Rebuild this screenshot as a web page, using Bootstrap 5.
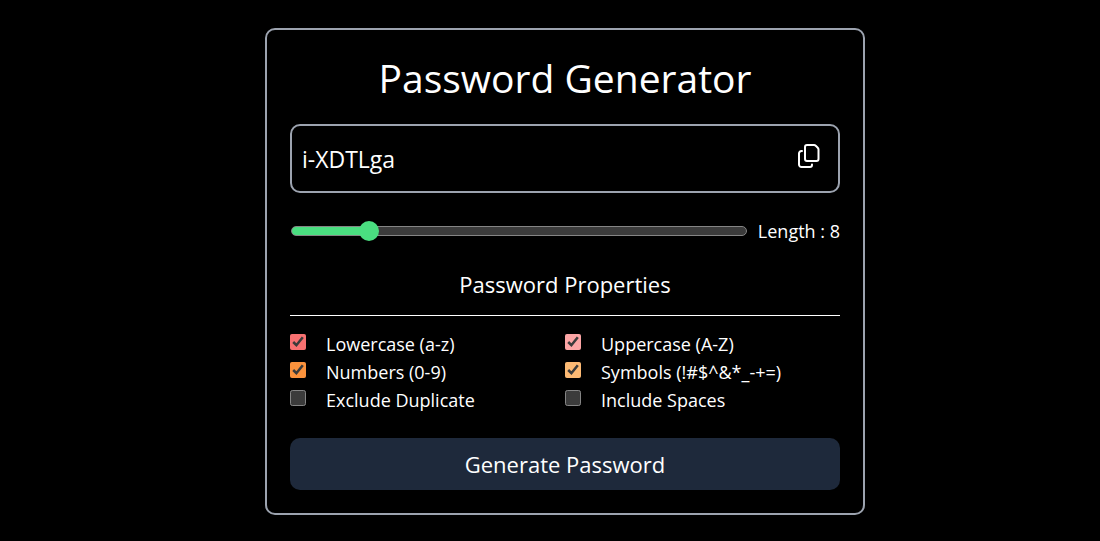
<!DOCTYPE html>
<html lang="en">
<head>
<meta charset="utf-8">
<meta name="viewport" content="width=device-width, initial-scale=1">
<title>Password Generator</title>
<link href="https://cdn.jsdelivr.net/npm/bootstrap@5.3.0/dist/css/bootstrap.min.css" rel="stylesheet">
<style>
  body { background: #000; color: #fff; color-scheme: dark; font-family: "Open Sans", "Noto Sans", sans-serif; font-size: 18px; line-height: 28px; }
  main { padding: 28px 0 24px 30px; }
  .generator { max-width: 600px; padding: 23px; border: 2px solid #9ca3af; border-radius: 10px; }
  .generator h1 { font-size: 39px; line-height: 50px; margin-bottom: 21px; font-weight: 400; }
  .output { height: 69px; padding: 0 10px; border: 2px solid #9ca3af; border-radius: 10px; }
  .output input { background: transparent; border: 0; outline: 0; padding: 0; color: #fff; font-size: 23px; line-height: 40px; height: 40px; min-width: 0; }
  .copy { background: none; border: 0; color: #fff; padding: 0 8px 6px; }
  .length-row { margin-top: 24px; gap: 10px; }
  .length-slider { --fill: 0%; appearance: none; -webkit-appearance: none; background: transparent; height: 20px; min-width: 0; margin: 0 1px; }
  .length-slider::-webkit-slider-runnable-track { height: 10px; border: 1px solid #858585; border-radius: 5px; background: linear-gradient(to right, #4ade80 var(--fill), #3b3b3b var(--fill)); }
  .length-slider::-webkit-slider-thumb { -webkit-appearance: none; width: 20px; height: 20px; margin-top: -6px; border-radius: 50%; background: #4ade80; }
  .generator h2 { font-size: 22px; line-height: 30px; font-weight: 400; margin: 24px 0 16px; }
  .properties { border-top: 1px solid #fff; padding-top: 14px; margin-bottom: 24px; }
  .option { gap: 20px; }
  .option input { width: 16px; height: 16px; margin: 0 0 4px; }
  .lower { accent-color: #f87171; }
  .upper { accent-color: #fca5a5; }
  .digits { accent-color: #fb923c; }
  .symbols { accent-color: #fdba74; }
  .generate, .generate:hover { background: #1e293b; color: #fff; font-size: 22px; line-height: 32px; padding: 10px; border: 0; border-radius: 10px; }
</style>
</head>
<body>
<main>
  <div class="generator mx-auto">
    <h1 class="text-center">Password Generator</h1>
    <div class="output d-flex align-items-center">
      <input class="flex-grow-1" type="text" value="i-XDTLga" aria-label="Generated password" readonly>
      <button class="copy d-flex" type="button" aria-label="Copy password">
        <svg width="22" height="24" viewBox="0 0 22 24" fill="none" stroke="currentColor" stroke-width="2" stroke-linejoin="round" stroke-linecap="round">
          <path d="M9 1H16Q17 1 18 2L19.500 3.500Q20.500 4.500 20.500 5.500V15A2 2 0 0 1 18.500 17H9A2 2 0 0 1 7 15V3A2 2 0 0 1 9 1Z"/>
          <path d="M4 7H3.500A2.500 2.500 0 0 0 1 9.500V20.500A2.500 2.500 0 0 0 3.500 23H12A2 2 0 0 0 14 21V20.500"/>
        </svg>
      </button>
    </div>
    <div class="length-row d-flex align-items-center">
      <input class="length-slider flex-grow-1" id="length" type="range" min="4" max="30" value="8" style="--fill: 16%">
      <label for="length" class="text-nowrap">Length : 8</label>
    </div>
    <h2 class="text-center">Password Properties</h2>
    <div class="properties row g-0">
      <div class="col-6 option d-flex align-items-center"><input class="lower" type="checkbox" id="lower" checked><label for="lower">Lowercase (a-z)</label></div>
      <div class="col-6 option d-flex align-items-center"><input class="upper" type="checkbox" id="upper" checked><label for="upper">Uppercase (A-Z)</label></div>
      <div class="col-6 option d-flex align-items-center"><input class="digits" type="checkbox" id="digits" checked><label for="digits">Numbers (0-9)</label></div>
      <div class="col-6 option d-flex align-items-center"><input class="symbols" type="checkbox" id="symbols" checked><label for="symbols">Symbols (!#$^&amp;*_-+=)</label></div>
      <div class="col-6 option d-flex align-items-center"><input type="checkbox" id="unique"><label for="unique">Exclude Duplicate</label></div>
      <div class="col-6 option d-flex align-items-center"><input type="checkbox" id="spaces"><label for="spaces">Include Spaces</label></div>
    </div>
    <button class="generate btn w-100" type="button">Generate Password</button>
  </div>
</main>
<script src="https://cdn.jsdelivr.net/npm/bootstrap@5.3.0/dist/js/bootstrap.bundle.min.js"></script>
</body>
</html>
